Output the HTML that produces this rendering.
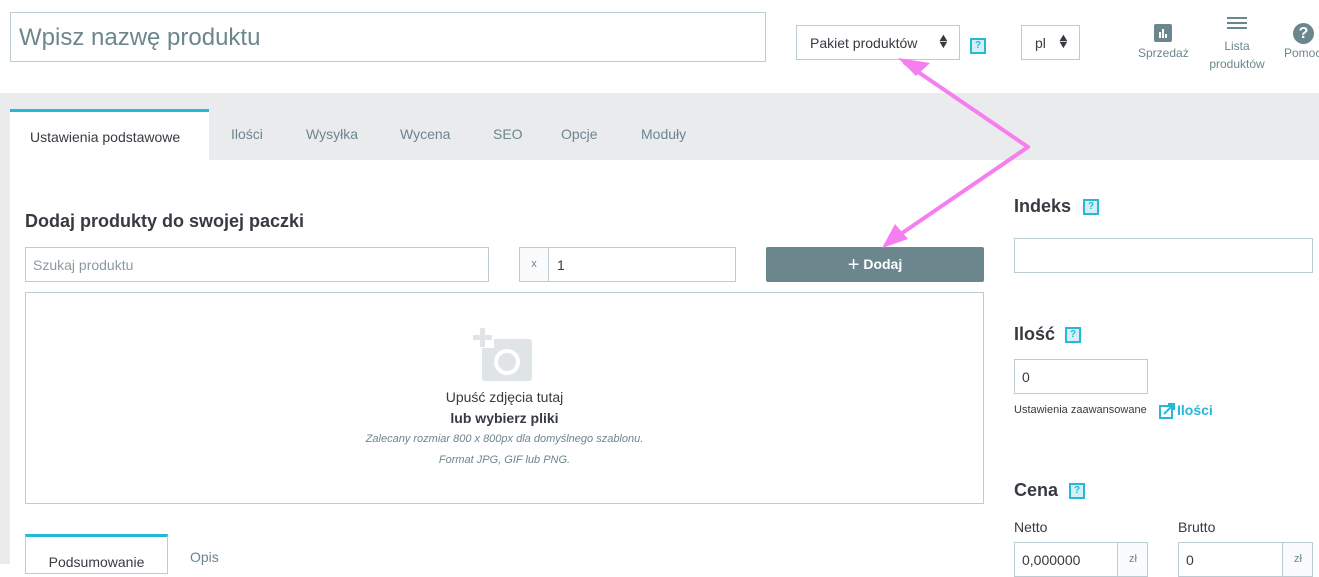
<!DOCTYPE html><html><head><meta charset="utf-8"><style>
*{box-sizing:border-box;margin:0;padding:0}
body{width:1319px;height:564px;overflow:hidden;background:#fff;font-family:"Liberation Sans",sans-serif;color:#363a41;position:relative}
.a{position:absolute}
.inp{position:absolute;border:1px solid #bbcdd2;background:#fff;overflow:hidden}
.q{position:absolute;width:16px;height:16px;border:2px solid #25b9d7;background:#d4f0f6;color:#25b9d7;font-size:10px;font-weight:bold;text-align:center;line-height:12px}
.tab{position:absolute;top:126px;font-size:14px;color:#6c868e}
h3{position:absolute;font-size:18px;font-weight:bold;color:#363a41}
.ar{position:absolute;right:10px;top:9px;font-size:11px;line-height:7px;transform:scaleX(1.2)}
</style></head><body>
<div class="inp" style="left:10px;top:12px;width:756px;height:50px;font-size:24px;color:#6c868e;padding:11px 8px">Wpisz nazwę produktu</div>
<div class="inp" style="left:796px;top:25px;width:164px;height:35px;font-size:14px;padding:9px 13px">Pakiet produktów <span class="ar">▲<br>▼</span></div>
<div class="q" style="left:970px;top:38px">?</div>
<div class="inp" style="left:1021px;top:25px;width:59px;height:35px;font-size:14px;padding:9px 13px">pl <span class="ar">▲<br>▼</span></div>
<div class="a" style="left:1154px;top:24px;width:18px;height:18px;background:#6c868e;border-radius:2px"><div class="a" style="left:5px;top:8px;width:2px;height:6px;background:#fff"></div><div class="a" style="left:8px;top:5px;width:2px;height:9px;background:#fff"></div><div class="a" style="left:11px;top:10px;width:2px;height:4px;background:#fff"></div></div>
<div class="a" style="left:1138px;top:46px;font-size:12px;color:#6c868e">Sprzedaż</div>
<div class="a" style="left:1227px;top:17px;width:20px;height:14px;background:repeating-linear-gradient(#6c868e 0 2px,transparent 2px 5px)"></div>
<div class="a" style="left:1205px;top:37px;width:64px;text-align:center;font-size:12px;color:#6c868e;line-height:18px">Lista produktów</div>
<div class="a" style="left:1293px;top:23px;width:21px;height:21px;border-radius:50%;background:#6c868e;color:#fff;font-weight:bold;font-size:16px;text-align:center;line-height:21px">?</div>
<div class="a" style="left:1284px;top:46px;font-size:12px;color:#6c868e">Pomoc</div>
<div class="a" style="left:0;top:93px;width:1319px;height:67px;background:#eaebec"></div>
<div class="a" style="left:0;top:160px;width:10px;height:404px;background:#eaebec"></div>
<div class="a" style="left:10px;top:109px;width:199px;height:51px;background:#fff;border-top:3px solid #25b9d7"></div>
<div class="tab" style="left:30px;top:129px;color:#363a41">Ustawienia podstawowe</div>
<div class="tab" style="left:231px">Ilości</div><div class="tab" style="left:306px">Wysyłka</div><div class="tab" style="left:400px">Wycena</div><div class="tab" style="left:493px">SEO</div><div class="tab" style="left:561px">Opcje</div><div class="tab" style="left:641px">Moduły</div>
<h3 style="left:25px;top:211px">Dodaj produkty do swojej paczki</h3>
<div class="inp" style="left:25px;top:247px;width:464px;height:35px;font-size:14px;color:#8a9ba0;padding:9px 7px">Szukaj produktu</div>
<div class="inp" style="left:519px;top:247px;width:217px;height:35px;font-size:14px;padding:9px 37px">1<div class="a" style="left:0;top:0;width:29px;height:33px;border-right:1px solid #bbcdd2;background:#fafbfc;font-size:11px;color:#6c868e;text-align:center;line-height:33px">x</div></div>
<div class="a" style="left:766px;top:247px;width:218px;height:35px;background:#6c868e;border-radius:2px;color:#fff;font-size:14px;font-weight:bold;text-align:center;line-height:35px"><span style="font-weight:normal;font-size:20px;vertical-align:-2px">+</span> Dodaj</div>
<div class="inp" style="left:25px;top:292px;width:959px;height:212px"></div>
<div class="a" style="left:482px;top:339px;width:50px;height:42px;background:#dfe5e7;border-radius:3px"></div>
<div class="a" style="left:494px;top:349px;width:26px;height:26px;border:4px solid #fff;border-radius:50%"></div>
<div class="a" style="left:472px;top:326px;width:22px;height:22px;background:#fff"></div>
<div class="a" style="left:480px;top:328px;width:5px;height:19px;background:#dfe5e7"></div>
<div class="a" style="left:473px;top:335px;width:19px;height:5px;background:#dfe5e7"></div>
<div class="a" style="left:25px;top:389px;width:959px;text-align:center;font-size:14px">Upuść zdjęcia tutaj</div>
<div class="a" style="left:25px;top:410px;width:959px;text-align:center;font-size:14px;font-weight:bold">lub wybierz pliki</div>
<div class="a" style="left:25px;top:433px;width:959px;text-align:center;font-size:11px;font-style:italic;color:#6c868e">Zalecany rozmiar 800 x 800px dla domyślnego szablonu.</div>
<div class="a" style="left:25px;top:454px;width:959px;text-align:center;font-size:11px;font-style:italic;color:#6c868e">Format JPG, GIF lub PNG.</div>
<div class="a" style="left:25px;top:534px;width:143px;height:40px;border:1px solid #bbcdd2;border-top:3px solid #25b9d7;font-size:14px;text-align:center;padding-top:17px">Podsumowanie</div>
<div class="a" style="left:190px;top:549px;font-size:14px;color:#6c868e">Opis</div>
<h3 style="left:1014px;top:196px">Indeks</h3><div class="q" style="left:1083px;top:199px">?</div>
<div class="inp" style="left:1014px;top:238px;width:299px;height:35px"></div>
<h3 style="left:1014px;top:324px">Ilość</h3><div class="q" style="left:1065px;top:327px">?</div>
<div class="inp" style="left:1014px;top:359px;width:134px;height:35px;font-size:14px;padding:9px 7px">0</div>
<div class="a" style="left:1014px;top:404px;font-size:11px">Ustawienia zaawansowane</div>
<svg class="a" style="left:1159px;top:403px" width="16" height="16"><rect x="1" y="3" width="12" height="12" fill="none" stroke="#25b9d7" stroke-width="2"/><path d="M5 11 L14 2 M9 1 H15 V7" fill="none" stroke="#25b9d7" stroke-width="2"/></svg>
<div class="a" style="left:1177px;top:402px;font-size:14px;font-weight:bold;color:#25b9d7">Ilości</div>
<h3 style="left:1014px;top:480px">Cena</h3><div class="q" style="left:1069px;top:483px">?</div>
<div class="a" style="left:1014px;top:519px;font-size:14px">Netto</div>
<div class="a" style="left:1178px;top:519px;font-size:14px">Brutto</div>
<div class="inp" style="left:1014px;top:542px;width:134px;height:35px;font-size:14px;padding:9px 7px">0,000000<span style="position:absolute;left:102px;top:0;width:31px;height:33px;border-left:1px solid #bbcdd2;background:#fafbfc;font-size:11px;text-align:center;line-height:33px;color:#6c868e">zł</span></div>
<div class="inp" style="left:1178px;top:542px;width:135px;height:35px;font-size:14px;padding:9px 7px">0<span style="position:absolute;left:103px;top:0;width:31px;height:33px;border-left:1px solid #bbcdd2;background:#fafbfc;font-size:11px;text-align:center;line-height:33px;color:#6c868e">zł</span></div>
<svg class="a" style="left:0;top:0" width="1319" height="564"><g stroke="#f57ef0" stroke-width="4" fill="#f57ef0" stroke-linecap="round"><line x1="1028" y1="147" x2="905" y2="63"/><line x1="1028" y1="147" x2="892" y2="240"/></g><polygon fill="#f57ef0" points="898,58 930,63 916,76"/><polygon fill="#f57ef0" points="882,248 895,224 908,239"/></svg>
</body></html>
